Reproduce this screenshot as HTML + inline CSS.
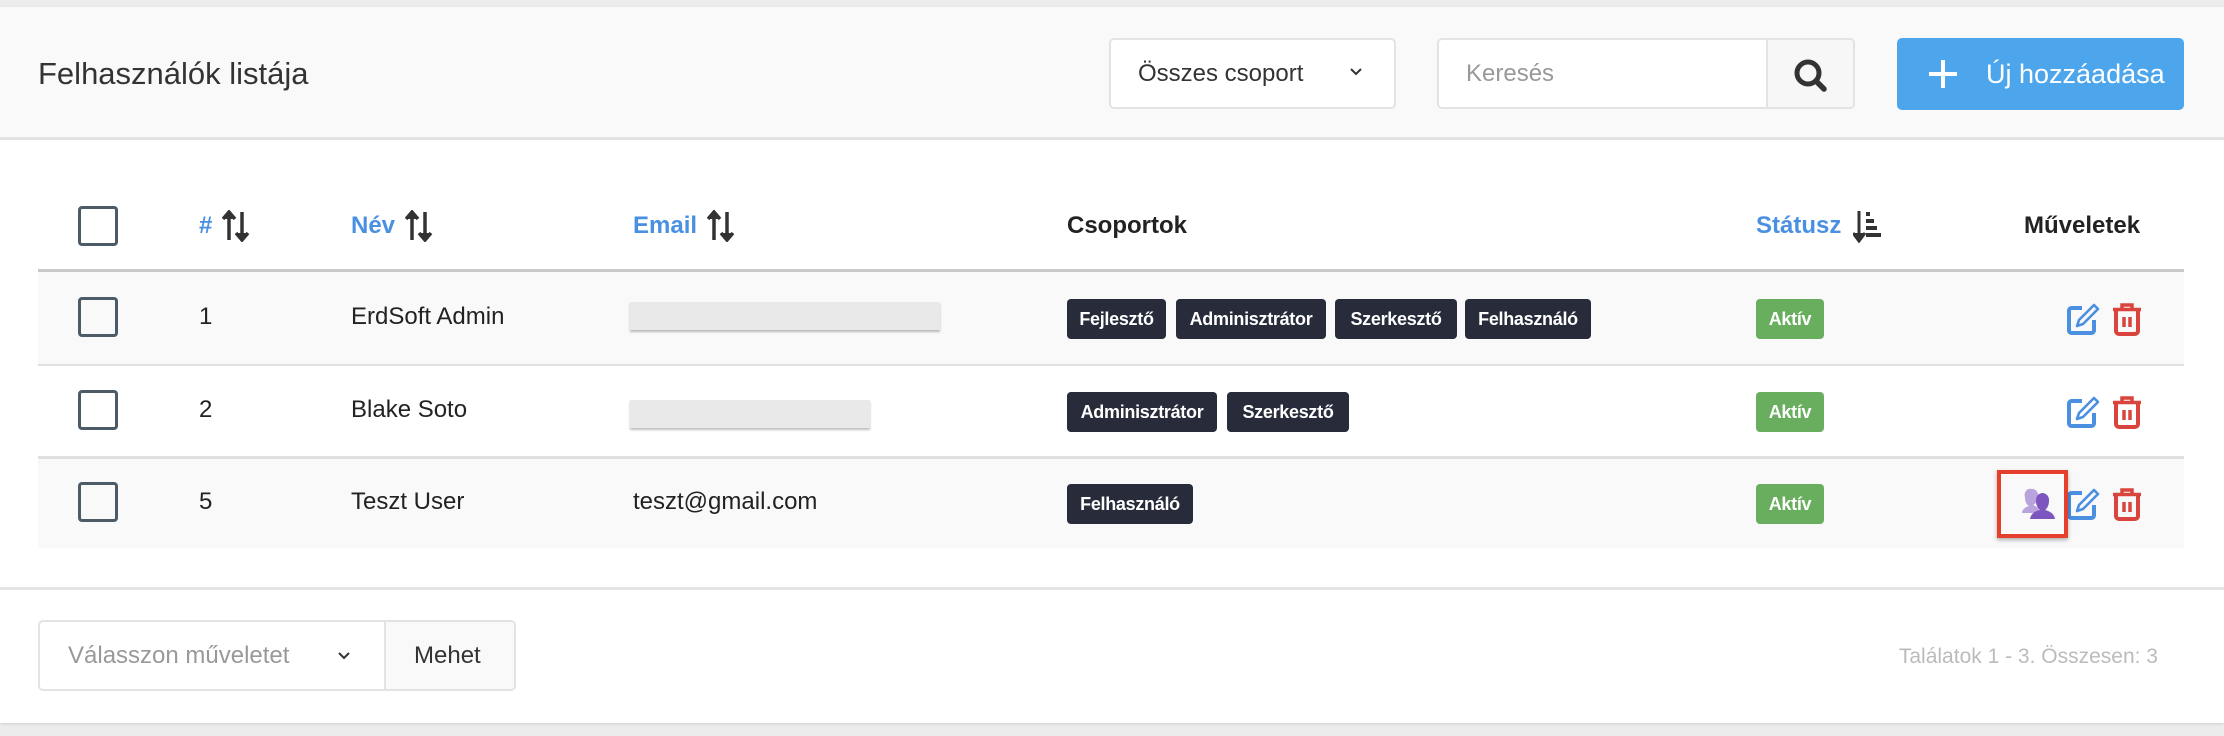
<!DOCTYPE html>
<html><head><meta charset="utf-8"><style>
*{box-sizing:border-box;margin:0;padding:0}
body{width:2224px;height:736px;background:#ececec;font-family:"Liberation Sans",sans-serif;color:#222;position:relative;overflow:hidden}
.abs{position:absolute}
.panel{left:0;top:7px;width:2224px;height:716px;background:#fff;box-shadow:0 1px 3px rgba(0,0,0,.12)}
.hdr{left:0;top:7px;width:2224px;height:133px;background:#f9f9f9;border-bottom:3px solid #e2e2e2}
.title{left:38px;top:56px;font-size:31px;color:#333}
.box{border:2px solid #e3e3e3;border-radius:5px;background:#fff}
.t24{font-size:24px}
.cb{width:40px;height:40px;border:3.5px solid #4b5b67;border-radius:4px}
.th{font-size:24px;font-weight:bold;top:212px}
.blue{color:#4a90e2}
.row{left:38px;width:2146px}
.badge{height:40px;top:0;background:#272b3a;color:#fff;font-size:18px;font-weight:bold;border-radius:4px;line-height:40px;text-align:center;letter-spacing:-0.3px}
.green{background:#69ae5e}
</style></head><body>
<div class="abs panel"></div>
<div class="abs hdr"></div>
<div class="abs title">Felhasználók listája</div>
<div class="abs box" style="left:1109px;top:38px;width:287px;height:71px"></div>
<div class="abs t24" style="left:1138px;top:60px;color:#333">Összes csoport</div>
<svg class="abs" style="left:1349px;top:67px" width="14" height="10"><path d="M2 2l5 5 5-5" stroke="#333" stroke-width="2" fill="none"/></svg>
<div class="abs box" style="left:1437px;top:38px;width:418px;height:71px;overflow:hidden"><div style="position:absolute;left:327px;top:0;width:91px;height:71px;background:#f7f7f7;border-left:2px solid #e3e3e3"></div></div>
<div class="abs t24" style="left:1466px;top:60px;color:#999">Keresés</div>
<svg class="abs" style="left:1793px;top:59px" width="38" height="36"><circle cx="15" cy="14" r="11" stroke="#333" stroke-width="5" fill="none"/><path d="M23 22l8 8" stroke="#333" stroke-width="5.5" stroke-linecap="round"/></svg>
<div class="abs" style="left:1897px;top:38px;width:287px;height:72px;background:#4da6eb;border-radius:5px"></div>
<svg class="abs" style="left:1927px;top:58px" width="32" height="32"><path d="M16 2v28M2 16h28" stroke="#fff" stroke-width="4"/></svg>
<div class="abs" style="left:1986px;top:59px;font-size:27px;color:#fff">Új hozzáadása</div>

<div class="abs cb" style="left:78px;top:206px"></div>
<div class="abs th blue" style="left:199px">#</div>
<svg class="abs" style="left:222px;top:210px" width="28" height="32"><path d="M7 30V6M1 9l6-7 6 7" stroke="#333" stroke-width="3.5" fill="#333"/><path d="M20 2v24M14 23l6 7 6-7" stroke="#333" stroke-width="3.5" fill="#333"/></svg>
<div class="abs th blue" style="left:351px">Név</div>
<svg class="abs" style="left:405px;top:210px" width="28" height="32"><path d="M7 30V6M1 9l6-7 6 7" stroke="#333" stroke-width="3.5" fill="#333"/><path d="M20 2v24M14 23l6 7 6-7" stroke="#333" stroke-width="3.5" fill="#333"/></svg>
<div class="abs th blue" style="left:633px">Email</div>
<svg class="abs" style="left:707px;top:210px" width="28" height="32"><path d="M7 30V6M1 9l6-7 6 7" stroke="#333" stroke-width="3.5" fill="#333"/><path d="M20 2v24M14 23l6 7 6-7" stroke="#333" stroke-width="3.5" fill="#333"/></svg>
<div class="abs th" style="left:1067px;color:#222">Csoportok</div>
<div class="abs th blue" style="left:1756px">Státusz</div>
<svg class="abs" style="left:1853px;top:209px" width="30" height="34"><path d="M6 2v26M0 24l6 8 6-8" stroke="#333" stroke-width="3" fill="#333"/><rect x="13" y="3" width="4" height="4" fill="#333"/><rect x="13" y="10" width="8" height="4" fill="#333"/><rect x="13" y="17" width="11" height="4" fill="#333"/><rect x="13" y="24" width="15" height="4" fill="#333"/></svg>
<div class="abs th" style="left:2024px;color:#222">Műveletek</div>

<div class="abs row" style="top:269px;height:95px;background:#f9f9f9;border-top:3px solid #c9c9c9"></div>
<div class="abs row" style="top:364px;height:93px;background:#fff;border-top:2px solid #e0e0e0"></div>
<div class="abs row" style="top:456px;height:92px;background:#f9f9f9;border-top:3px solid #e0e0e0"></div>

<div class="abs cb" style="left:78px;top:297px"></div>
<div class="abs t24" style="left:199px;top:303px">1</div>
<div class="abs t24" style="left:351px;top:303px">ErdSoft Admin</div>
<div class="abs" style="left:630px;top:302px;width:310px;height:28px;background:#e9e9e9;box-shadow:0 2px 2px rgba(0,0,0,.25)"></div>
<div class="abs" style="left:0;top:299px">
<div class="abs badge" style="left:1067px;width:99px">Fejlesztő</div>
<div class="abs badge" style="left:1176px;width:150px">Adminisztrátor</div>
<div class="abs badge" style="left:1335px;width:122px">Szerkesztő</div>
<div class="abs badge" style="left:1465px;width:126px">Felhasználó</div>
<div class="abs badge green" style="left:1756px;width:68px">Aktív</div>
</div>
<div class="abs cb" style="left:78px;top:390px"></div>
<div class="abs t24" style="left:199px;top:396px">2</div>
<div class="abs t24" style="left:351px;top:396px">Blake Soto</div>
<div class="abs" style="left:630px;top:400px;width:240px;height:28px;background:#e9e9e9;box-shadow:0 2px 2px rgba(0,0,0,.25)"></div>
<div class="abs" style="left:0;top:392px">
<div class="abs badge" style="left:1067px;width:150px">Adminisztrátor</div>
<div class="abs badge" style="left:1227px;width:122px">Szerkesztő</div>
<div class="abs badge green" style="left:1756px;width:68px">Aktív</div>
</div>
<div class="abs cb" style="left:78px;top:482px"></div>
<div class="abs t24" style="left:199px;top:488px">5</div>
<div class="abs t24" style="left:351px;top:488px">Teszt User</div>
<div class="abs t24" style="left:633px;top:488px">teszt@gmail.com</div>
<div class="abs" style="left:0;top:484px">
<div class="abs badge" style="left:1067px;width:126px">Felhasználó</div>
<div class="abs badge green" style="left:1756px;width:68px">Aktív</div>
</div>

<svg width="0" height="0" style="position:absolute"><defs>
<g id="ed"><path d="M15 5H4.5A2.5 2.5 0 0 0 2 7.5v20A2.5 2.5 0 0 0 4.5 30h20a2.5 2.5 0 0 0 2.5-2.5V17" stroke="#4a8fe0" stroke-width="4" fill="none"/><path d="M27 2l4 4-15 15-6 2 2-6z" stroke="#4a8fe0" stroke-width="2.6" fill="none" stroke-linejoin="round"/></g>
<g id="tr"><path d="M11 5V2h10v3M2 6.5h28" stroke="#d9453d" stroke-width="3.5" fill="none"/><path d="M5 8v20a3 3 0 0 0 3 3h16a3 3 0 0 0 3-3V8" stroke="#d9453d" stroke-width="4" fill="none"/><path d="M13 14v10M19 14v10" stroke="#d9453d" stroke-width="3.5"/></g>
</defs></svg>
<svg class="abs" style="left:2067px;top:303px" width="34" height="33"><use href="#ed"/></svg>
<svg class="abs" style="left:2111px;top:303px" width="34" height="33"><use href="#tr"/></svg>
<svg class="abs" style="left:2067px;top:396px" width="34" height="33"><use href="#ed"/></svg>
<svg class="abs" style="left:2111px;top:396px" width="34" height="33"><use href="#tr"/></svg>
<svg class="abs" style="left:2067px;top:488px" width="34" height="33"><use href="#ed"/></svg>
<svg class="abs" style="left:2111px;top:488px" width="34" height="33"><use href="#tr"/></svg>
<div class="abs" style="left:1997px;top:470px;width:71px;height:68px;border:4px solid #e4402c;box-shadow:0 2px 4px rgba(0,0,0,.3)"></div>
<svg class="abs" style="left:2018px;top:487px" width="40" height="34"><path d="M14 2a6 6 0 0 1 6 7c0 4-2 8-5 9 3 1 6 3 7 8H4c0-4 4-6 7-7-3-2-4-5-4-9a6 6 0 0 1 7-8z" fill="#b9a3dc"/><path d="M24 6a7 7 0 0 1 7 8c0 4-2 8-4 9 4 1 9 3 10 9H12c1-6 6-8 10-9-2-1-4-5-4-9a7 7 0 0 1 6-8z" fill="#7d55be"/></svg>

<div class="abs" style="left:0;top:587px;width:2224px;height:3px;background:#e5e5e5"></div>
<div class="abs box" style="left:38px;top:620px;width:478px;height:71px;border-radius:5px;overflow:hidden"><div style="position:absolute;left:344px;top:0;width:134px;height:71px;background:#f9f9f9;border-left:2px solid #e3e3e3"></div></div>
<div class="abs t24" style="left:68px;top:642px;color:#999">Válasszon műveletet</div>
<svg class="abs" style="left:337px;top:651px" width="14" height="10"><path d="M2 2l5 5 5-5" stroke="#333" stroke-width="2" fill="none"/></svg>
<div class="abs t24" style="left:414px;top:642px;color:#333">Mehet</div>
<div class="abs" style="left:1868px;top:645px;width:290px;text-align:right;font-size:21px;color:#bbb">Találatok 1 - 3. Összesen: 3</div>
</body></html>
